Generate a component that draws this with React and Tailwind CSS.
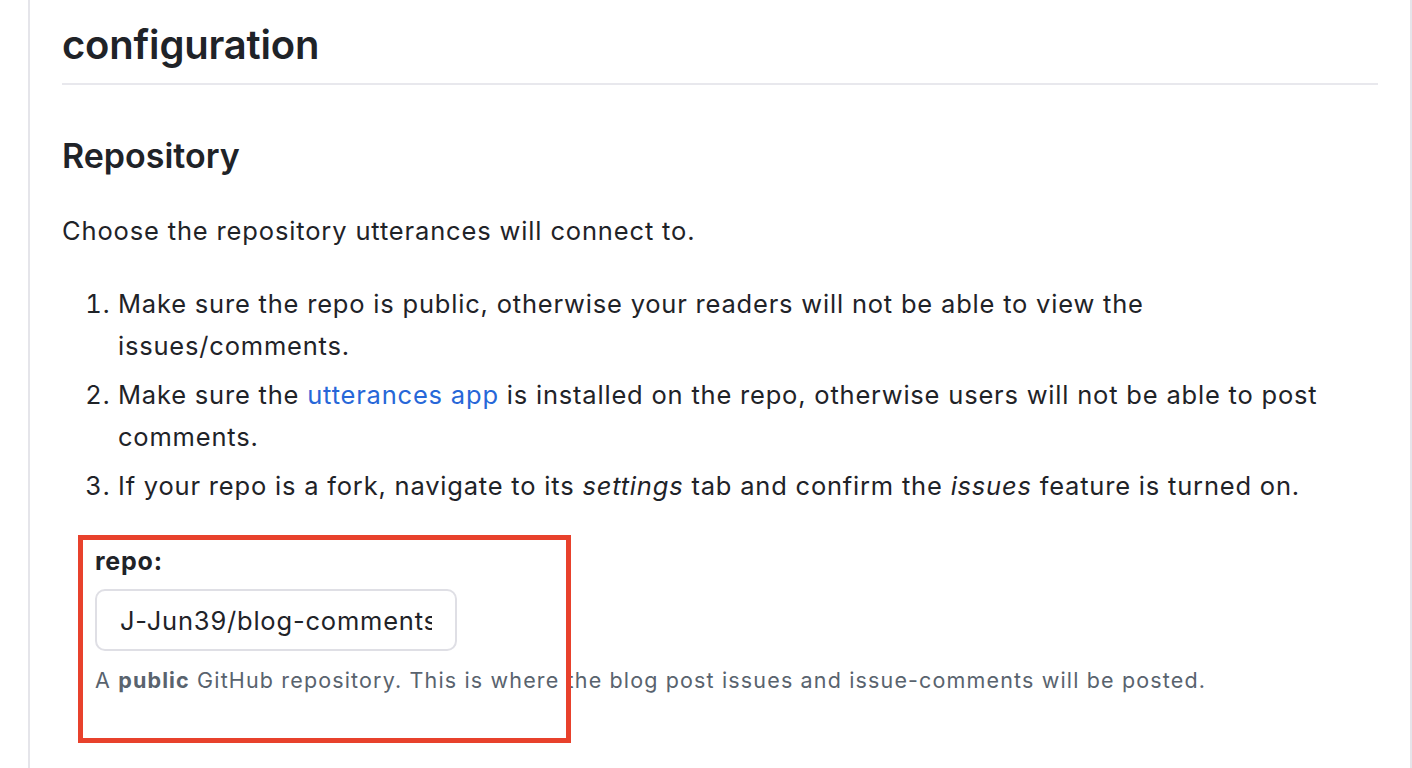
import React from "react";

export default function App() {
  return (
    <div className="relative w-[1412px] h-[768px] overflow-hidden bg-white font-[family-name:Inter,'Noto_Sans',sans-serif] text-[#1f2328]">
      <div className="ml-[28px] h-full border-x-2 border-[#e5e5ea] px-8">
        <h1 className="pt-[20px] pb-[13px] text-[40px] leading-[50px] font-semibold border-b-2 border-[#e8e8ed] tracking-[-0.2px]">
          configuration
        </h1>
        <h2 className="mt-[49px] text-[34px] leading-[44px] font-semibold tracking-[0px]">
          Repository
        </h2>
        <p className="mt-[32px] text-[25.5px] leading-[41px] tracking-[0.85px]">
          Choose the repository utterances will connect to.
        </p>
        <ol className="mt-[32px] list-decimal pl-[56px] text-[25.5px] leading-[42px] tracking-[0.8px]">
          <li>
            Make sure the repo is public, otherwise your readers will not be able to view the
            <br />
            issues/comments.
          </li>
          <li className="mt-[7px]">
            Make sure the <a className="text-[#2767d8]">utterances app</a> is installed on the repo, otherwise users will not be able to post
            <br />
            comments.
          </li>
          <li className="mt-[7px]">
            If your repo is a fork, navigate to its <em>settings</em> tab and confirm the <em>issues</em> feature is turned on.
          </li>
        </ol>
        <div className="pl-[33px]">
          <div className="mt-[34px] text-[25px] leading-[41px] font-bold tracking-[0.8px]">repo:</div>
          <input
            readOnly
            value="J-Jun39/blog-comments"
            className="mt-[7px] block w-[362px] h-[62px] rounded-[10px] border-2 border-[#dfdfe5] bg-white px-[23px] text-[25.5px] tracking-[0.8px] text-[#1f2328] outline-none font-[family-name:Inter,'Noto_Sans',sans-serif]"
          />
          <p className="mt-[13px] text-[21.5px] leading-[32px] tracking-[1.15px] text-[#59636e]">
            A <strong className="font-bold">public</strong> GitHub repository. This is where the blog post issues and issue-comments will be posted.
          </p>
        </div>
      </div>
      <div className="absolute left-[78px] top-[535px] w-[493px] h-[208px] border-[5px] border-[#e8412c] pointer-events-none" />
    </div>
  );
}
